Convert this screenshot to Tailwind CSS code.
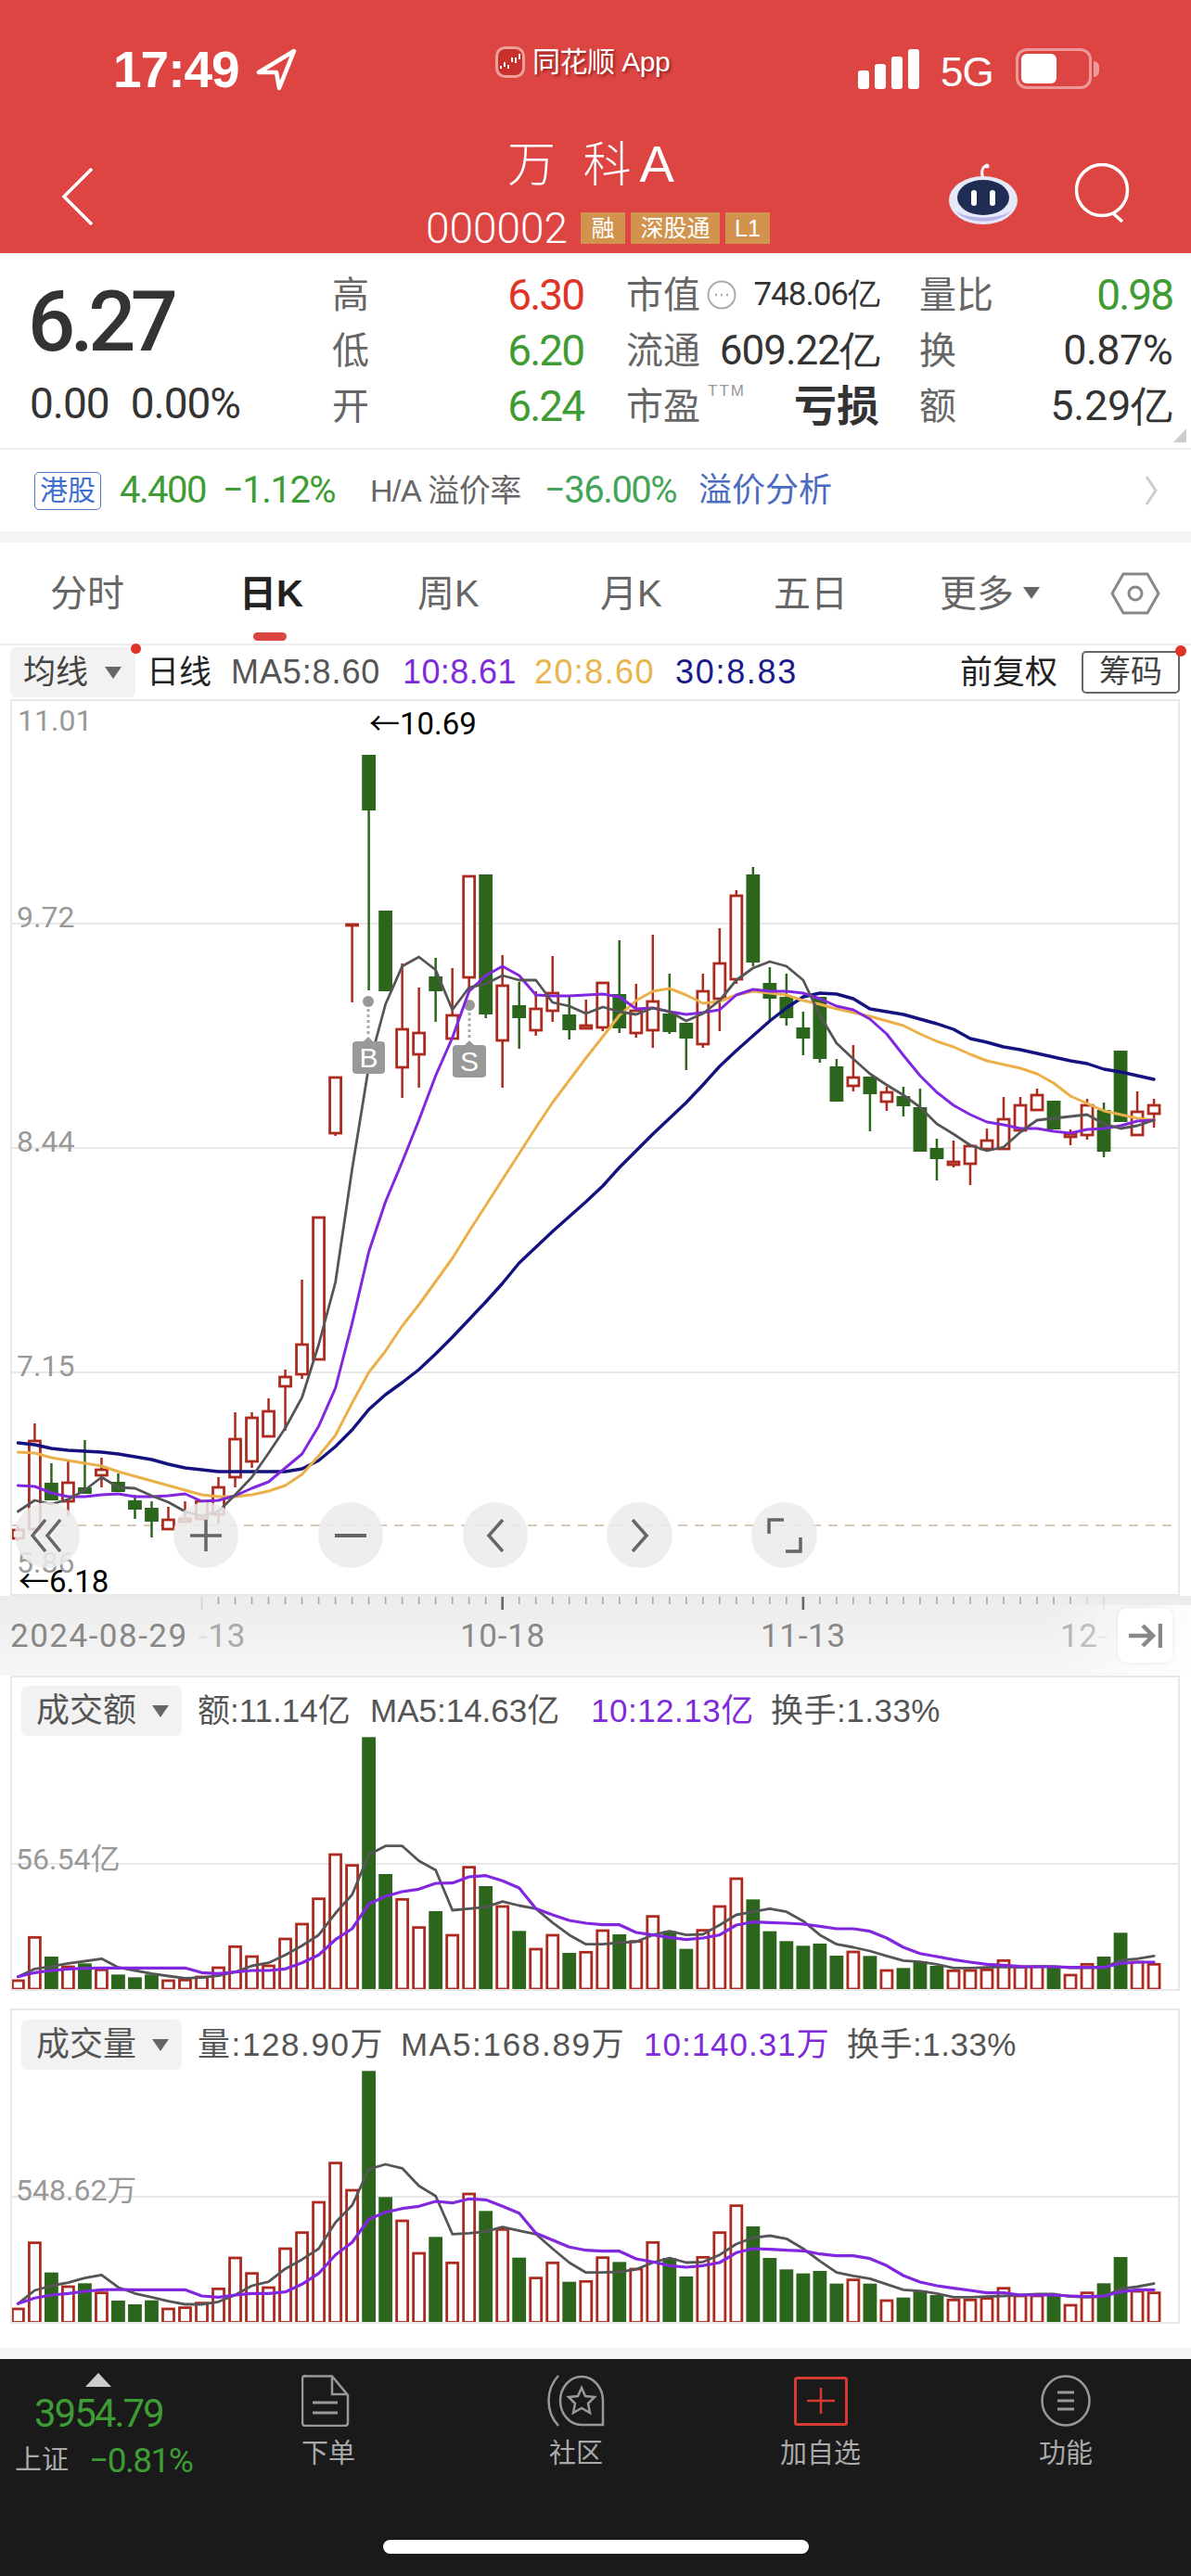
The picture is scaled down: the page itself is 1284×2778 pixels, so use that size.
<!DOCTYPE html>
<html lang="zh">
<head>
  <meta charset="UTF-8">
  <title>万科A</title>
  <script src="https://cdn.jsdelivr.net/npm/@tailwindcss/browser@4"></script>
</head>
<body class="w-[1284px] h-[2778px] overflow-hidden bg-white flex flex-col font-['Liberation_Sans','Noto_Sans_CJK_SC',sans-serif]">

  <!-- red header -->
  <header class="h-[273px] shrink-0 bg-[#dd4542] text-white flex flex-col">
    <div class="h-[150px] flex pt-[50px] items-start">
      <div class="w-[534px] pl-[122px] flex items-center h-[50px]">
        <span class="text-[55px] leading-none font-bold tracking-[-1px] w-[154px]">17:49</span>
        <svg width="44" height="46" viewBox="0 0 44 46" fill="none" stroke="white" stroke-width="4.5" stroke-linejoin="round"><path d="M41 3 3 26h19l3 17z"/></svg>
      </div>
      <div class="w-[391px] flex items-center">
        <svg width="32" height="34" viewBox="0 0 32 34"><rect x="1.5" y="1.5" width="29" height="31" rx="9" fill="#c9302c" stroke="#f0a09c" stroke-width="3"/><path d="M6 24v-3M10 22v-5M14 24v-4M18 17v-5M22 18v-6M26 14V8" stroke="#fff" stroke-width="2"/></svg>
        <span class="ml-[8px] text-[30px] leading-none tracking-[-0.5px] [text-shadow:2px_2px_3px_rgba(80,0,0,0.55)]">同花顺 App</span>
      </div>
      <div class="flex items-end h-[46px]">
        <div class="flex items-end gap-[6px] w-[89px]">
          <div class="w-[12px] h-[20px] bg-white rounded-[3px]"></div>
          <div class="w-[12px] h-[27px] bg-white rounded-[3px]"></div>
          <div class="w-[12px] h-[35px] bg-white rounded-[3px]"></div>
          <div class="w-[12px] h-[43px] bg-white rounded-[3px]"></div>
        </div>
        <span class="text-[44px] leading-[36px] w-[81px] tracking-[-1px] font-['Liberation_Sans',sans-serif]">5G</span>
        <div class="w-[82px] h-[44px] border-[3px] border-white/45 rounded-[12px] p-[3px] flex items-stretch">
          <div class="w-[38px] bg-white rounded-[6px]"></div>
        </div>
        <div class="ml-[2px] mb-[13px] w-[6px] h-[17px] bg-white/45 rounded-r-full"></div>
      </div>
    </div>
    <div class="h-[123px] flex">
      <div class="w-[459px] pl-[67px] pt-[31px]">
        <svg width="34" height="62" viewBox="0 0 34 62" fill="none" stroke="white" stroke-width="3.5"><path d="M32 1 2 31l30 30"/></svg>
      </div>
      <div class="w-[371px] flex flex-col">
        <div class="pl-[88px] h-[79px] text-[52px] leading-[53px] font-light [word-spacing:15px]">万 科<span class="ml-[9px] text-[56px]">A</span></div>
        <div class="flex items-center h-[34px]">
          <span class="text-[46px] leading-none font-['Roboto',sans-serif] font-light w-[167px]">000002</span>
          <span class="w-[48px] h-[34px] bg-[#d2934f] text-[25px] leading-[34px] text-center">融</span>
          <span class="ml-[6px] w-[96px] h-[34px] bg-[#d2934f] text-[25px] leading-[34px] text-center">深股通</span>
          <span class="ml-[6px] w-[48px] h-[34px] bg-[#d2934f] text-[25px] leading-[34px] text-center">L1</span>
        </div>
      </div>
      <div class="flex-1 pl-[192px] pt-[26px] flex items-start">
        <svg width="76" height="68" viewBox="0 0 76 68">
          <path d="M38 16c-3-6-1-13 4-13" fill="none" stroke="#f0f2fb" stroke-width="3"/>
          <circle cx="42" cy="3" r="2.5" fill="#f0f2fb"/>
          <ellipse cx="38" cy="40" rx="37" ry="26" fill="#e6e9f8"/>
          <path d="M8 52a37 26 0 0 0 60 0 40 20 0 0 1-60 0z" fill="#b9b4ee"/>
          <ellipse cx="38" cy="37" rx="28" ry="19" fill="#1f2c54"/>
          <rect x="25" y="29" width="6" height="17" rx="3" fill="#fff"/>
          <rect x="45" y="29" width="6" height="17" rx="3" fill="#fff"/>
        </svg>
        <svg class="ml-[61px]" width="62" height="64" viewBox="0 0 62 64" fill="none" stroke="white" stroke-width="3.5"><circle cx="29" cy="29" r="27.5"/><path d="M41 54l10 9"/></svg>
      </div>
    </div>
  </header>

  <!-- quote panel -->
  <section class="h-[210px] shrink-0 flex relative text-[#666]">
    <div class="w-[358px] pl-[30px] pt-[27px] text-[#333]">
      <div class="text-[90px] leading-[96px] font-['Roboto',sans-serif] font-medium tracking-[-5.5px]">6.27</div>
      <div class="mt-[17px] ml-[2px] text-[46px] leading-[44px] font-['Roboto',sans-serif] tracking-[-1px] flex gap-[23px]"><span>0.00</span><span>0.00%</span></div>
    </div>
    <div class="w-[271px] pt-[15px] text-[40px]">
      <div class="h-[60px] flex items-center justify-between"><span>高</span><span class="text-[46px] font-['Roboto',sans-serif] tracking-[-2px] text-[#e0342b]">6.30</span></div>
      <div class="h-[60px] flex items-center justify-between"><span>低</span><span class="text-[46px] font-['Roboto',sans-serif] tracking-[-2px] text-[#3f9c35]">6.20</span></div>
      <div class="h-[60px] flex items-center justify-between"><span>开</span><span class="text-[46px] font-['Roboto',sans-serif] tracking-[-2px] text-[#3f9c35]">6.24</span></div>
    </div>
    <div class="ml-[46px] w-[273px] pt-[15px] text-[40px]">
      <div class="h-[60px] flex items-center">
        <span>市值</span>
        <svg class="ml-[7px]" width="32" height="32" viewBox="0 0 32 32" fill="none" stroke="#aaa" stroke-width="2"><circle cx="16" cy="16" r="14.5"/><path d="M9 16h2M15 16h2M21 16h2" stroke-width="2.5"/></svg>
        <span class="ml-auto text-[35px] font-['Roboto',sans-serif] tracking-[-1px] text-[#333]">748.06亿</span>
      </div>
      <div class="h-[60px] flex items-center">
        <span>流通</span>
        <span class="ml-auto text-[44px] font-['Roboto',sans-serif] tracking-[-1px] text-[#333]">609.22亿</span>
      </div>
      <div class="h-[60px] flex items-center relative">
        <span>市盈</span>
        <span class="absolute left-[88px] top-[5px] text-[17px] leading-none font-light text-[#999] tracking-[2px]">TTM</span>
        <span class="ml-auto text-[46px] font-bold text-[#333]">亏损</span>
      </div>
    </div>
    <div class="ml-[43px] w-[273px] pt-[15px] text-[40px]">
      <div class="h-[60px] flex items-center justify-between"><span>量比</span><span class="text-[46px] font-['Roboto',sans-serif] tracking-[-2px] text-[#3f9c35]">0.98</span></div>
      <div class="h-[60px] flex items-center justify-between"><span>换</span><span class="text-[45px] font-['Roboto',sans-serif] tracking-[-0.6px] text-[#333]">0.87%</span></div>
      <div class="h-[60px] flex items-center justify-between"><span>额</span><span class="text-[45px] font-['Roboto',sans-serif] tracking-[-0.2px] text-[#333]">5.29亿</span></div>
    </div>
    <div class="absolute right-[5px] bottom-[6px] w-0 h-0 border-l-[14px] border-l-transparent border-b-[15px] border-b-[#ccc]"></div>
  </section>

  <!-- H share row -->
  <section class="h-[90px] shrink-0 border-t-2 border-[#eeeeee] flex items-center text-[40px] leading-none whitespace-nowrap">
    <span class="ml-[37px] w-[72px] h-[41px] border-[1.5px] border-[#4a72c8] rounded-[5px] text-[#3d6fd0] text-[30px] leading-[37px] text-center">港股</span>
    <span class="ml-[20px] w-[111px] text-[#3f9c35] font-['Roboto',sans-serif] tracking-[-1.5px]">4.400</span>
    <span class="w-[159px] text-[#3f9c35] font-['Roboto',sans-serif] tracking-[-1.5px]">−1.12%</span>
    <span class="w-[188px] text-[#666] text-[34px] tracking-[-0.5px]">H/A 溢价率</span>
    <span class="w-[166px] text-[#46a35a] font-['Roboto',sans-serif] tracking-[-1.5px]">−36.00%</span>
    <span class="text-[#4a6bbf] text-[36px]">溢价分析</span>
    <svg class="ml-auto mr-[36px]" width="14" height="32" viewBox="0 0 14 32" fill="none" stroke="#ccc" stroke-width="3"><path d="M2 1l10 15L2 31"/></svg>
  </section>
  <div class="h-[12px] shrink-0 bg-[#f4f4f4]"></div>

  <!-- period tabs -->
  <nav class="h-[111px] shrink-0 border-b-2 border-[#ececec] pl-[54px] flex items-center text-[40px] text-[#666] relative">
    <span class="w-[204px]">分时</span>
    <span class="w-[192px] text-[#222] font-semibold">日K</span>
    <span class="w-[197px]">周K</span>
    <span class="w-[187px]">月K</span>
    <span class="w-[179px]">五日</span>
    <span class="w-[90px]">更多</span>
    <div class="w-0 h-0 border-x-[9px] border-x-transparent border-t-[13px] border-t-[#666]"></div>
    <svg class="ml-[76px]" width="54" height="46" viewBox="0 0 54 46" fill="none" stroke="#888" stroke-width="3" stroke-linejoin="round"><path d="M2 23 14 2h26l12 21-12 21H14z"/><circle cx="27" cy="23" r="7"/></svg>
    <div class="absolute left-[273px] bottom-[3px] w-[36px] h-[9px] rounded-full bg-[#dd4542]"></div>
  </nav>

  <!-- MA legend -->
  <div class="h-[58px] shrink-0 flex items-center pl-[11px] text-[36px] relative whitespace-nowrap">
    <div class="w-[135px] h-[54px] bg-[#f2f2f2] rounded-[6px] pl-[14px] flex items-center text-[35px] text-[#444]">
      <span class="w-[88px]">均线</span>
      <div class="w-0 h-0 border-x-[9px] border-x-transparent border-t-[13px] border-t-[#666]"></div>
    </div>
    <span class="ml-[12px] w-[91px] text-[35px] text-[#222]">日线</span>
    <span class="w-[185px] tracking-[0.9px] text-[#555]">MA5:8.60</span>
    <span class="w-[142px] tracking-[0.4px] text-[#7f2bdc]">10:8.61</span>
    <span class="w-[152px] tracking-[1.4px] text-[#e9b44c]">20:8.60</span>
    <span class="tracking-[1.7px] text-[#1a1a8c]">30:8.83</span>
    <span class="absolute left-[1035px] top-[7px] text-[35px] leading-[44px] text-[#222]">前复权</span>
    <div class="absolute left-[1166px] top-[6px] w-[106px] h-[46px] border-2 border-[#666] rounded-[5px] text-[34px] leading-[40px] text-center text-[#444]">筹码</div>
    <div class="absolute left-[141px] top-[-2px] w-[11px] h-[11px] rounded-full bg-[#e0342b]"></div>
    <div class="absolute left-[1267px] top-[0px] w-[12px] h-[12px] rounded-full bg-[#e0342b]"></div>
  </div>

  <!-- price chart -->
  <div class="h-[967px] shrink-0 relative font-['Roboto','Noto_Sans_CJK_SC',sans-serif]">
    <svg id="kline" class="block" width="1284" height="967" viewBox="0 754 1284 967"></svg>
    <div class="absolute left-[11px] top-0 w-[1261px] h-[967px] border-2 border-[#e8e8e8]"></div>

    <span class="absolute left-[19px] top-[3px] text-[32px] leading-[40px] text-[#999]">11.01</span>
    <span class="absolute left-[18px] top-[215px] text-[32px] leading-[40px] text-[#999]">9.72</span>
    <span class="absolute left-[18px] top-[457px] text-[32px] leading-[40px] text-[#999]">8.44</span>
    <span class="absolute left-[18px] top-[699px] text-[32px] leading-[40px] text-[#999]">7.15</span>
    <span class="absolute left-[18px] top-[911px] text-[32px] leading-[40px] text-[#999]">5.86</span>
    <span class="absolute left-[398px] top-[7px] text-[33px] leading-[40px] text-black">←10.69</span>
    <span class="absolute left-[20px] top-[932px] text-[33px] leading-[40px] text-black">←6.18</span>

    <!-- B / S trade marks -->
    <div class="absolute left-[380px] top-[369px] w-[35px] h-[35px] rounded-[4px] bg-[#999] text-white text-[30px] leading-[35px] text-center font-['Liberation_Sans',sans-serif]">B</div>
    <div class="absolute left-[488px] top-[373px] w-[36px] h-[35px] rounded-[4px] bg-[#999] text-white text-[30px] leading-[35px] text-center font-['Liberation_Sans',sans-serif]">S</div>

    <!-- chart controls -->
    <div class="absolute left-[16px] top-[866px] w-[70px] h-[71px] rounded-full bg-[#ebebeb]/85 flex items-center justify-center">
      <svg width="36" height="36" viewBox="0 0 36 36" fill="none" stroke="#666" stroke-width="3.5"><path d="M16 1 2 18l14 17M32 1 18 18l14 17"/></svg>
    </div>
    <div class="absolute left-[187px] top-[866px] w-[70px] h-[71px] rounded-full bg-[#ebebeb]/85 flex items-center justify-center">
      <svg width="34" height="34" viewBox="0 0 34 34" fill="none" stroke="#666" stroke-width="3.5"><path d="M0 17h34M17 0v34"/></svg>
    </div>
    <div class="absolute left-[343px] top-[866px] w-[70px] h-[71px] rounded-full bg-[#ebebeb]/85 flex items-center justify-center">
      <svg width="34" height="4" viewBox="0 0 34 4" fill="none" stroke="#666" stroke-width="4"><path d="M0 2h34"/></svg>
    </div>
    <div class="absolute left-[499px] top-[866px] w-[70px] h-[71px] rounded-full bg-[#ebebeb]/85 flex items-center justify-center">
      <svg width="20" height="36" viewBox="0 0 20 36" fill="none" stroke="#666" stroke-width="3.5"><path d="M18 1 3 18l15 17"/></svg>
    </div>
    <div class="absolute left-[654px] top-[866px] w-[71px] h-[71px] rounded-full bg-[#ebebeb]/85 flex items-center justify-center">
      <svg width="20" height="36" viewBox="0 0 20 36" fill="none" stroke="#666" stroke-width="3.5"><path d="M2 1l15 17L2 35"/></svg>
    </div>
    <div class="absolute left-[810px] top-[866px] w-[71px] h-[71px] rounded-full bg-[#ebebeb]/85 flex items-center justify-center">
      <svg width="38" height="38" viewBox="0 0 38 38" fill="none" stroke="#666" stroke-width="3.5"><path d="M2 17V2h16M36 21v15H20"/></svg>
    </div>
  </div>

  <!-- date axis -->
  <div class="h-[86px] shrink-0 relative bg-gradient-to-b from-[#ececec] to-[#f6f6f6] overflow-hidden font-['Roboto',sans-serif] text-[35px] text-[#888]">
    <svg id="ticks" class="absolute left-0 top-0" width="1284" height="20"></svg>
    <span class="absolute left-[11px] top-[23px] leading-[42px] tracking-[1.5px]">2024-08-29</span>
    <span class="absolute left-[214px] top-[23px] leading-[42px] tracking-[0.7px]"><span class="text-[#e0e0e0]">-</span><span class="text-[#aaa]">13</span></span>
    <span class="absolute left-[496px] top-[23px] leading-[42px] tracking-[0.7px]">10-18</span>
    <span class="absolute left-[820px] top-[23px] leading-[42px] tracking-[0.7px]">11-13</span>
    <span class="absolute left-[1143px] top-[23px] leading-[42px] tracking-[0.7px]"><span class="text-[#aaa]">12</span><span class="text-[#ddd]">-</span></span>
    <div class="absolute left-[1130px] top-[10px] w-[154px] h-[76px] bg-gradient-to-r from-transparent to-white/90"></div>
    <div class="absolute left-[1205px] top-[13px] w-[59px] h-[59px] rounded-[10px] bg-white shadow-[0_0_4px_rgba(0,0,0,0.08)] flex items-center justify-center">
      <svg width="36" height="28" viewBox="0 0 36 28" fill="none" stroke="#888" stroke-width="4.5"><path d="M0 14h26M15 3l11 11-11 11"/><path d="M34 1v26"/></svg>
    </div>
  </div>

  <!-- turnover -->
  <div class="h-[340px] shrink-0 relative">
    <svg id="amount" class="block" width="1284" height="340" viewBox="0 1807 1284 340"></svg>
    <div class="absolute left-[11px] top-0 w-[1261px] h-[340px] border-2 border-[#e8e8e8]"></div>
    <div class="absolute left-[23px] top-[11px] flex items-center text-[35px] text-[#555] whitespace-nowrap">
      <div class="w-[173px] h-[54px] bg-[#f2f2f2] rounded-[6px] pl-[16px] flex items-center text-[36px]">
        <span class="w-[125px]">成交额</span>
        <div class="w-0 h-0 border-x-[9px] border-x-transparent border-t-[13px] border-t-[#666]"></div>
      </div>
      <span class="ml-[17px] w-[186px]">额:11.14亿</span>
      <span class="w-[238px]">MA5:14.63亿</span>
      <span class="w-[194px] tracking-[0.5px] text-[#7f2bdc]">10:12.13亿</span>
      <span class="tracking-[0.5px]">换手:1.33%</span>
    </div>
    <span class="absolute left-[17px] top-[178px] text-[32px] leading-[40px] text-[#999] font-['Roboto','Noto_Sans_CJK_SC',sans-serif]">56.54亿</span>
  </div>
  <div class="h-[19px] shrink-0"></div>

  <!-- volume -->
  <div class="h-[340px] shrink-0 relative">
    <svg id="volume" class="block" width="1284" height="340" viewBox="0 2166 1284 340"></svg>
    <div class="absolute left-[11px] top-0 w-[1261px] h-[340px] border-2 border-[#e8e8e8]"></div>
    <div class="absolute left-[23px] top-[12px] flex items-center text-[35px] text-[#555] whitespace-nowrap">
      <div class="w-[173px] h-[54px] bg-[#f2f2f2] rounded-[6px] pl-[16px] flex items-center text-[36px]">
        <span class="w-[125px]">成交量</span>
        <div class="w-0 h-0 border-x-[9px] border-x-transparent border-t-[13px] border-t-[#666]"></div>
      </div>
      <span class="ml-[17px] w-[219px] tracking-[1.6px]">量:128.90万</span>
      <span class="w-[262px] tracking-[1.7px]">MA5:168.89万</span>
      <span class="w-[219px] tracking-[1px] text-[#7f2bdc]">10:140.31万</span>
      <span class="tracking-[0.5px]">换手:1.33%</span>
    </div>
    <span class="absolute left-[17px] top-[176px] text-[32px] leading-[40px] text-[#999] font-['Roboto','Noto_Sans_CJK_SC',sans-serif]">548.62万</span>
  </div>
  <div class="h-[26px] shrink-0"></div>
  <div class="h-[12px] shrink-0 bg-[#f4f4f4]"></div>

  <!-- bottom bar -->
  <footer class="h-[234px] shrink-0 bg-[#1a1a1a] relative text-[#aaa] text-[29px] flex items-start">
    <div class="w-[300px] pl-[16px] pt-[15px] flex flex-col">
      <div class="ml-[76px] w-0 h-0 border-x-[14px] border-x-transparent border-b-[15px] border-b-[#ccc]"></div>
      <div class="ml-[21px] mt-[10px] text-[42px] leading-[38px] text-[#3f9c35] font-['Roboto',sans-serif] tracking-[-2px]">3954.79</div>
      <div class="mt-[14px] flex items-center h-[36px]">
        <span class="w-[80px]">上证</span>
        <span class="text-[37px] text-[#3f9c35] font-['Roboto',sans-serif] tracking-[-1.5px]">−0.81%</span>
      </div>
    </div>
    <div class="ml-[25px] w-[57px] pt-[17px] flex flex-col items-start">
      <svg width="52" height="56" viewBox="0 0 52 56" fill="none" stroke="#999" stroke-width="2.5"><path d="M4 1.5h29L50 22v30a3 3 0 0 1-3 3H4a3 3 0 0 1-3-3V4a3 3 0 0 1 3-3z"/><path d="M33 2v19h17"/><path d="M12 30h27M12 41h27" stroke-width="3"/></svg>
      <span class="mt-[8px] whitespace-nowrap">下单</span>
    </div>
    <div class="ml-[209px] w-[60px] pt-[17px] flex flex-col items-center">
      <svg width="62" height="56" viewBox="0 0 62 56" fill="none" stroke="#999" stroke-width="2.5"><path d="M12 1C-2 16-2 40 12 55"/><path d="M14 28a23 26 0 0 1 46 0v26H37A23 26 0 0 1 14 28z"/><path d="M37 14l4 9 10 1-7 7 2 10-9-5-9 5 2-10-7-7 10-1z"/></svg>
      <span class="mt-[8px] whitespace-nowrap">社区</span>
    </div>
    <div class="ml-[188px] w-[91px] pt-[19px] flex flex-col items-center">
      <svg width="58" height="53" viewBox="0 0 58 53" fill="none" stroke="#d53a33" stroke-width="3"><rect x="1.5" y="1.5" width="55" height="50" rx="2"/><path d="M14 26h30M29 12v28" stroke-width="2.5"/></svg>
      <span class="mt-[9px] whitespace-nowrap">加自选</span>
    </div>
    <div class="ml-[189px] w-[60px] pt-[17px] flex flex-col items-center">
      <svg width="54" height="56" viewBox="0 0 54 56" fill="none" stroke="#999" stroke-width="2.5"><ellipse cx="27" cy="28" rx="25.5" ry="26.5"/><path d="M18 19h18M18 28h18M18 37h18" stroke-width="3"/></svg>
      <span class="mt-[8px] whitespace-nowrap">功能</span>
    </div>
    <div class="absolute left-[413px] top-[195px] w-[459px] h-[15px] rounded-full bg-white"></div>
  </footer>

  <script>
    const RED = '#ad2a1f', GREEN = '#2c661c', GRAY = '#555555', PURPLE = '#8227e0', ORANGE = '#ebb04a', NAVY = '#13127f';
    const X = i => 19.4 + 18.01 * i;

    // kind, body top, body bottom, wick top, wick bottom (page pixels)
    const candles = [
      ['r',1649,1660,1646,1662],['r',1553,1650,1535,1652],['g',1599,1618,1578,1618],['r',1598,1620,1576,1635],
      ['g',1604,1611,1553,1611],['r',1584,1592,1572,1604],['g',1598,1609,1589,1609],['g',1618,1628,1612,1638],
      ['g',1626,1641,1619,1658],['r',1638,1650,1625,1650],['r',1637,1642,1619,1642],['r',1618,1639,1618,1639],
      ['r',1603,1634,1593,1643],['r',1551,1594,1523,1604],['r',1528,1577,1523,1583],['r',1521,1550,1508,1550],
      ['r',1484,1496,1477,1543],['r',1449,1483,1380,1487],['r',1312,1467,1312,1467],['r',1161,1223,1161,1225],
      ['r',996,998,996,1081],['g',814,874,814,1068],['g',982,1069,982,1069],['r',1109,1152,1039,1184],
      ['r',1113,1138,1065,1173],['g',1053,1069,1033,1102],['r',1094,1121,1044,1121],['r',944,1055,944,1068],
      ['g',943,1094,943,1098],['r',1062,1123,1030,1173],['g',1084,1098,1059,1131],['r',1087,1112,1069,1117],
      ['r',1070,1091,1031,1102],['g',1094,1111,1075,1121],['r',1105,1110,1078,1110],['r',1059,1109,1059,1112],
      ['g',1072,1109,1014,1114],['r',1089,1115,1061,1119],['r',1079,1112,1008,1130],['g',1093,1113,1050,1115],
      ['g',1103,1120,1103,1154],['r',1068,1127,1050,1130],['r',1038,1078,1001,1112],['r',965,1057,960,1061],
      ['g',943,1038,935,1042],['g',1060,1077,1043,1101],['g',1075,1098,1050,1106],['g',1108,1120,1091,1138],
      ['g',1075,1142,1075,1146],['g',1150,1188,1142,1188],['r',1161,1172,1127,1177],['g',1161,1180,1161,1220],
      ['r',1177,1189,1172,1198],['g',1182,1193,1172,1204],['g',1194,1242,1174,1242],['g',1238,1250,1228,1273],
      ['r',1252,1257,1230,1259],['r',1235,1256,1235,1278],['r',1229,1240,1217,1241],['r',1206,1240,1183,1240],
      ['r',1191,1220,1183,1220],['r',1180,1198,1174,1198],['g',1187,1218,1187,1218],['r',1222,1227,1218,1235],
      ['r',1191,1225,1185,1229],['g',1197,1242,1189,1248],['g',1133,1210,1133,1210],['r',1198,1225,1177,1225],
      ['r',1191,1202,1185,1216]
    ];
    const ma5 = [1630,1618,1622,1617,1607,1593,1604,1605,1613,1620,1630,1635,1630,1612,1593,1567,1540,1507,1450,1383,1261,1150,1083,1042,1032,1046,1089,1065,1061,1052,1057,1057,1081,1085,1093,1086,1091,1094,1087,1091,1101,1093,1079,1057,1044,1037,1042,1057,1095,1125,1142,1158,1170,1181,1194,1212,1223,1235,1241,1237,1221,1208,1206,1204,1202,1212,1217,1214,1208];
    const ma10 = [1602,1603,1610,1614,1614,1612,1611,1614,1614,1613,1611,1619,1618,1613,1605,1598,1583,1568,1538,1497,1427,1350,1296,1253,1208,1160,1119,1069,1052,1042,1052,1073,1074,1074,1073,1072,1075,1088,1087,1091,1094,1092,1089,1073,1067,1069,1069,1071,1077,1085,1089,1099,1115,1138,1160,1178,1192,1202,1210,1213,1217,1217,1220,1222,1218,1217,1214,1209,1208];
    const ma20 = [1566,1567,1572,1575,1578,1581,1587,1592,1597,1602,1607,1612,1614,1614,1612,1608,1602,1590,1570,1548,1513,1480,1457,1430,1407,1382,1357,1328,1300,1272,1244,1216,1189,1165,1141,1118,1095,1079,1069,1066,1073,1082,1080,1073,1069,1071,1073,1079,1083,1088,1092,1096,1101,1106,1115,1123,1129,1137,1144,1148,1152,1158,1168,1182,1190,1198,1202,1206,1208];
    const ma30 = [1556,1558,1562,1564,1565,1566,1568,1571,1574,1579,1583,1585,1587,1587,1587,1587,1587,1584,1575,1560,1542,1520,1504,1491,1477,1460,1442,1423,1404,1384,1362,1345,1328,1312,1296,1279,1259,1241,1223,1206,1189,1170,1150,1133,1117,1101,1087,1075,1071,1072,1077,1088,1091,1094,1099,1104,1110,1120,1124,1129,1132,1136,1140,1144,1147,1153,1156,1160,1164];

    // volume data, in the panel's own scale (page y = origin + v / 3)
    const kinds = candles.map(c => c[0]);
    const amountBars = [1005,865,930,960,952,970,988,997,988,1005,1003,993,963,895,927,957,870,822,740,597,632,220,663,742,833,783,858,638,702,765,847,903,858,918,913,843,858,878,797,848,905,842,765,675,745,848,880,895,888,927,912,928,972,967,945,960,973,972,970,940,960,960,960,987,952,930,853,945,952];
    const amountGray = [995,970,962,952,945,937,965,975,985,993,1000,998,992,980,960,950,925,895,860,790,730,600,572,572,620,650,780,775,770,752,765,775,820,860,890,890,885,882,860,848,860,858,828,795,785,775,785,815,860,890,900,912,928,943,947,955,967,967,965,963,965,962,962,966,966,965,942,937,928];
    const amountPurple = [995,982,975,970,968,967,967,967,967,967,967,982,985,980,975,975,970,950,925,875,840,760,735,720,712,693,692,672,668,685,708,775,795,813,822,827,827,852,860,868,875,870,860,828,818,820,822,825,832,840,840,848,870,900,920,930,940,948,955,958,962,963,963,965,965,965,952,948,948];
    const volumeBars = [1017,803,902,945,937,965,993,1005,992,1017,1013,998,952,852,902,948,822,770,672,545,633,250,658,732,837,787,868,645,703,760,854,917,868,932,928,851,868,888,802,855,915,850,770,683,753,855,892,905,897,938,923,938,990,983,960,975,988,988,983,950,975,975,972,1005,965,937,852,960,965];
    const volumeGray = [1003,960,945,935,920,910,950,970,982,995,1005,1005,997,975,945,932,890,860,825,740,685,568,552,565,622,655,778,775,770,755,767,778,825,870,902,902,900,892,870,855,870,868,845,810,790,783,793,825,865,902,913,922,940,958,962,970,982,982,980,978,975,972,972,980,982,980,955,948,938];
    const volumePurple = [1003,985,975,970,963,958,957,958,958,958,958,978,982,975,970,970,965,940,905,845,805,730,707,695,688,672,677,664,667,688,710,775,797,820,830,833,833,858,868,880,885,880,870,838,825,827,830,832,842,848,848,857,880,912,933,945,953,960,968,968,975,975,975,978,980,978,965,958,958];

    const hline = (y, c = '#e8e8e8', w = 2, extra = '') => `<line x1="11" x2="1272" y1="${y}" y2="${y}" stroke="${c}" stroke-width="${w}" ${extra}/>`;
    const poly = (ys, color, w, fy = v => v) => `<polyline fill="none" stroke="${color}" stroke-width="${w}" stroke-linejoin="round" stroke-linecap="round" points="${ys.map((v, i) => X(i).toFixed(1) + ',' + fy(v).toFixed(1)).join(' ')}"/>`;

    function renderKline() {
      let s = hline(996) + hline(1238) + hline(1480);
      s += hline(1645, '#cdb69b', 1.5, 'stroke-dasharray="10 8"');
      candles.forEach((c, i) => {
        const x = X(i), color = c[0] === 'r' ? RED : GREEN;
        s += `<line x1="${x}" x2="${x}" y1="${c[3]}" y2="${c[4]}" stroke="${color}" stroke-width="2.5"/>`;
        if (c[0] === 'r') s += `<rect x="${x - 6}" y="${c[1] + 1}" width="12" height="${Math.max(c[2] - c[1] - 2, 1)}" fill="#fff" stroke="${color}" stroke-width="2.8"/>`;
        else s += `<rect x="${x - 7.4}" y="${c[1]}" width="14.8" height="${c[2] - c[1]}" fill="${color}"/>`;
      });
      // B / S stems
      s += `<circle cx="397" cy="1080" r="6" fill="#999"/><line x1="397" x2="397" y1="1088" y2="1118" stroke="#aaa" stroke-width="3" stroke-dasharray="3 3"/><path d="M391 1124l6-6 6 6z" fill="#999"/>`;
      s += `<circle cx="506" cy="1084" r="6" fill="#999"/><line x1="506" x2="506" y1="1092" y2="1122" stroke="#aaa" stroke-width="3" stroke-dasharray="3 3"/><path d="M500 1128l6-6 6 6z" fill="#999"/>`;
      s += poly(ma30, NAVY, 3.4) + poly(ma20, ORANGE, 3) + poly(ma10, PURPLE, 3) + poly(ma5, GRAY, 2.8);
      document.getElementById('kline').innerHTML = s;
    }

    function renderVolume(id, bars, gray, purple, origin, gridY) {
      const fy = v => origin + v / 3;
      const base = fy(1038) + (origin === 2150 ? 9.5 : 0);
      let s = hline(gridY);
      bars.forEach((v, i) => {
        const x = X(i), top = fy(v);
        if (kinds[i] === 'r') s += `<rect x="${x - 6}" y="${top + 1}" width="12" height="${base - top - 2}" fill="#fff" stroke="${RED}" stroke-width="2.8"/>`;
        else s += `<rect x="${x - 7.4}" y="${top}" width="14.8" height="${base - top}" fill="${GREEN}"/>`;
      });
      s += poly(gray, GRAY, 2.8, fy) + poly(purple, PURPLE, 3.2, fy);
      document.getElementById(id).innerHTML = s;
    }

    function renderTicks() {
      let s = '';
      for (let i = 11; i <= 65; i++) {
        const big = i === 29 || i === 47;
        const faint = i === 11 || i === 65 || i === 64;
        const h = big || i === 11 || i === 65 ? 15 : 9;
        s += `<line x1="${X(i)}" x2="${X(i)}" y1="1" y2="${h}" stroke="${big ? '#666' : faint ? '#d5d5d5' : '#aaa'}" stroke-width="${big ? 2.6 : 1.6}"/>`;
      }
      document.getElementById('ticks').innerHTML = s;
    }

    renderKline();
    renderVolume('amount', amountBars, amountGray, amountPurple, 1800, 2010);
    renderVolume('volume', volumeBars, volumeGray, volumePurple, 2150, 2369);
    renderTicks();
  </script>
</body>
</html>
